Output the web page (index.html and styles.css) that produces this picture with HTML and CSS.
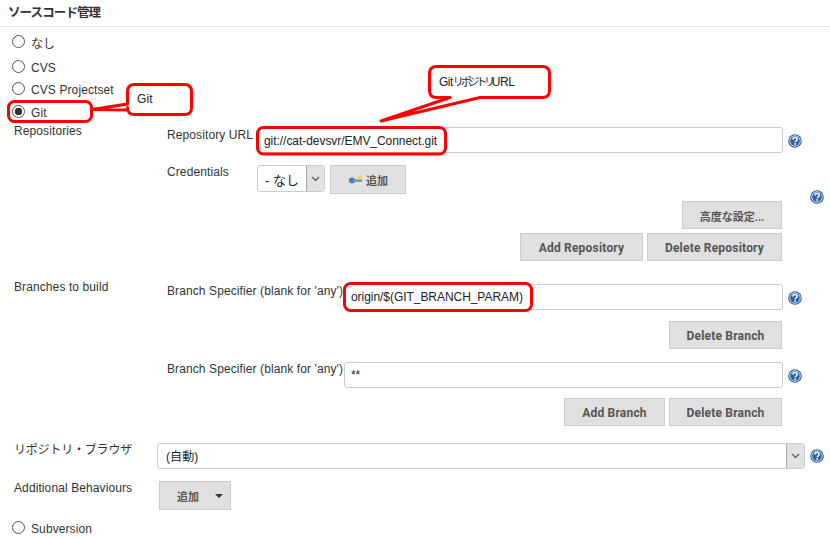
FILE: index.html
```html
<!DOCTYPE html>
<html lang="ja">
<head>
<meta charset="utf-8">
<title>ソースコード管理</title>
<link rel="stylesheet" href="styles.css">
</head>
<body>
<svg width="0" height="0" class="defs">
  <symbol id="help" viewBox="0 0 14 14">
    <circle cx="7" cy="7" r="6.8" fill="#2f5f9e"/>
    <circle cx="7" cy="7" r="5.7" fill="#dfe9f5"/>
    <circle cx="7" cy="7" r="4.8" fill="#2f62a3"/>
    <path d="M4.9 5.4c0-1.2 1-1.9 2.2-1.9s2.1.7 2.1 1.8c0 1.6-1.9 1.5-1.9 2.9" fill="none" stroke="#fff" stroke-width="1.5"/>
    <rect x="6.4" y="9.2" width="1.6" height="1.6" fill="#fff"/>
  </symbol>
</svg>
<main class="page">
  <h2 class="title">ソースコード管理</h2>
  <div class="radios">
    <label class="radio"><input type="radio" name="scm"><span>なし</span></label>
    <label class="radio"><input type="radio" name="scm"><span>CVS</span></label>
    <label class="radio"><input type="radio" name="scm"><span>CVS Projectset</span></label>
    <label class="radio"><input type="radio" name="scm" checked><span>Git</span></label>
  </div>

  <section class="group repos">
    <div class="group-label">Repositories</div>
    <div class="group-body">
      <div class="field url-row">
        <div class="field-label short">Repository URL</div>
        <input class="text" value="git://cat-devsvr/EMV_Connect.git">
        <svg class="help"><use href="#help"/></svg>
      </div>
      <div class="cred-row">
        <div class="field-label short">Credentials</div>
        <div class="select cred"><span class="select-value">- なし</span><span class="select-arrow"><svg width="9" height="6" viewBox="0 0 9 6"><path d="M1 1l3.5 3.5L8 1" fill="none" stroke="#555" stroke-width="1.1"/></svg></span></div>
        <button class="btn add-key" type="button">
          <svg width="15" height="10" viewBox="0 0 15 10"><circle cx="4" cy="5.5" r="3" fill="#4a7fb8"/><rect x="5" y="4.4" width="9" height="2.4" fill="#6b96c4"/><circle cx="12" cy="2.6" r="2" fill="#f1d94a"/></svg>
          <span>追加</span>
        </button>
        <svg class="help outer"><use href="#help"/></svg>
      </div>
      <div class="actions first"><button class="btn adv" type="button">高度な設定...</button></div>
      <div class="actions"><button class="btn add-repo" type="button">Add Repository</button><button class="btn del-repo" type="button">Delete Repository</button></div>
    </div>
  </section>

  <section class="group branches">
    <div class="group-label">Branches to build</div>
    <div class="group-body">
      <div class="field">
        <div class="field-label wide">Branch Specifier (blank for 'any')</div>
        <input class="text" value="origin/$(GIT_BRANCH_PARAM)">
        <svg class="help"><use href="#help"/></svg>
      </div>
      <div class="actions spec-actions"><button class="btn del-branch" type="button">Delete Branch</button></div>
      <div class="field">
        <div class="field-label wide">Branch Specifier (blank for 'any')</div>
        <input class="text" value="**">
        <svg class="help"><use href="#help"/></svg>
      </div>
      <div class="actions spec-actions"><button class="btn add-branch" type="button">Add Branch</button><button class="btn del-branch" type="button">Delete Branch</button></div>
    </div>
  </section>

  <section class="browser-row">
    <div class="browser-label">リポジトリ・ブラウザ</div>
    <div class="select browser"><span class="select-value">(自動)</span><span class="select-arrow"><svg width="9" height="6" viewBox="0 0 9 6"><path d="M1 1l3.5 3.5L8 1" fill="none" stroke="#555" stroke-width="1.1"/></svg></span></div>
    <svg class="help"><use href="#help"/></svg>
  </section>

  <section class="behaviours">
    <div class="behaviours-label">Additional Behaviours</div>
    <button class="btn menu" type="button"><span>追加</span><i class="caret"></i></button>
  </section>

  <label class="radio last"><input type="radio" name="scm"><span>Subversion</span></label>

  <svg class="marks" width="830" height="539" viewBox="0 0 830 539">
    <g fill="none" stroke="#f00" stroke-width="3">
      <rect x="8.500" y="101.500" width="83" height="20" rx="6"/>
      <rect x="257.500" y="127.500" width="188" height="26.500" rx="6"/>
      <rect x="344.500" y="283.500" width="187" height="27" rx="6"/>
    </g>
    <path d="M92 109.500L127.500 104V91.500Q127.500 84.500 134.500 84.500H184.500Q191.500 84.500 191.500 91.500V107.500Q191.500 114.500 184.500 114.500H134.500Q127.500 114.500 127.500 107.500V110Z" fill="#fff" stroke="#f00" stroke-width="3" stroke-linejoin="round"/>
    <path d="M381 121L450 97.500H436.500Q429.500 97.500 429.500 90.500V73.500Q429.500 66.500 436.500 66.500H542.500Q549.500 66.500 549.500 73.500V90.500Q549.500 97.500 542.500 97.500H480Z" fill="#fff" stroke="#f00" stroke-width="3" stroke-linejoin="round"/>
  </svg>
  <div class="note note-git">Git</div>
  <div class="note note-url">Git<span class="squeeze">リポジトリ</span>URL</div>
</main>
</body>
</html>
```
FILE: styles.css
```css
* { box-sizing: border-box; }
html, body { margin: 0; padding: 0; background: #fff; }
body {
  font-family: "Liberation Sans", Arial, "Noto Sans CJK JP", sans-serif;
  font-size: 12px;
  letter-spacing: 0.1px;
  color: #333;
  overflow: hidden;
}
.defs { position: absolute; }
.page { position: relative; width: 830px; height: 539px; overflow: hidden; }

.title {
  margin: 0;
  height: 27px;
  padding: 5px 0 0 8px;
  font-size: 12.500px;
  letter-spacing: -0.9px;
  line-height: 16px;
  font-weight: bold;
  color: #333;
  border-bottom: 1px solid #e4e4e4;
}

.radios { padding-top: 4px; height: 100px; }
.radio {
  display: flex;
  align-items: center;
  height: 23px;
  padding-left: 12px;
  color: #333;
}
.radios .radio:nth-child(2) { margin-top: 2px; }
.radios .radio:nth-child(3) { margin-top: -1px; }
.radio input {
  appearance: none;
  margin: -3px 6px 0 0;
  width: 13px;
  height: 13px;
  border: 1.5px solid #555;
  border-radius: 50%;
  background: #fff;
}
.radio input:checked {
  background: radial-gradient(circle, #333 0 3.5px, #fff 4px);
}
.radio.last { height: 23px; margin-top: 7px; }

.group { display: flex; }
.group-label { width: 167px; padding-left: 14px; line-height: 14px; }
.group-body { flex: 1; min-width: 0; padding-right: 6px; }
.repos .group-label { margin-top: -3px; }
.repos { height: 157px; }
.branches { height: 159px; }
.branches .group-label { margin-top: -4px; }

.field { display: flex; align-items: flex-start; height: 26px; padding-right: 22px; }
.field-label { line-height: 14px; }
.url-row .field-label { margin-top: 1px; }
.url-row .text { padding-top: 2px; }
.field-label.short { width: 90px; }
.field-label.wide { width: 177px; white-space: nowrap; }
.text {
  flex: 1;
  min-width: 0;
  height: 26px;
  padding: 0 6px;
  font: 12px "Liberation Sans", Arial, sans-serif;
  letter-spacing: -0.05px;
  color: #222;
  border: 1px solid #ccc;
  border-radius: 3px;
  background: #fff;
}
.help { width: 14px; height: 14px; flex: none; }
.field .help { margin: 7px 0 0 5px; }

.cred-row { display: flex; align-items: flex-start; height: 36px; margin-top: 12px; }
.select {
  display: flex;
  height: 27px;
  border: 1px solid #ccc;
  border-radius: 3px;
  background: #fff;
}
.select-value { flex: 1; padding: 1px 8px 0; line-height: 25px; color: #222; white-space: nowrap; }
.select-arrow {
  width: 18px;
  flex: none;
  display: flex;
  align-items: center;
  justify-content: center;
  background: #e2e2e2;
  border-left: 1px solid #aaa;
}
.cred { width: 68px; margin-right: 5px; }
.cred .select-value { font-size: 13px; padding: 2px 0 0 7px; letter-spacing: 0; }
.btn {
  display: inline-flex;
  align-items: center;
  justify-content: center;
  gap: 3px;
  height: 28px;
  padding: 1px 0 0;
  border: 1px solid #ccc;
  background: #e0e0e0;
  color: #555;
  font: bold 12px Roboto, "Noto Sans CJK JP", sans-serif;
  letter-spacing: 0.2px;
}
.add-key { width: 76px; height: 29px; font-size: 11px; letter-spacing: 0; }
.help.outer { margin: 25px 0 0 auto; }

.actions { display: flex; justify-content: flex-end; gap: 4px; padding-right: 42px; }
.actions.first { margin-bottom: 4px; }
.adv { width: 100px; font-size: 11px; letter-spacing: 0; }
.add-repo { width: 123px; }
.del-repo { width: 135px; }
.del-branch { width: 113px; }
.add-branch { width: 101px; }
.spec-actions { margin: 11px 0 13px; }
.spec-actions:last-child { margin-top: 10px; }

.browser-row { display: flex; align-items: flex-start; padding: 0 6px 0 14px; height: 38px; }
.browser-label { width: 143px; line-height: 14px; font-size: 12px; letter-spacing: -0.2px; }
.browser { flex: 1; height: 26px; margin-right: 5px; }
.browser-row .help { margin-top: 6px; }

.behaviours { display: flex; align-items: flex-start; padding-left: 14px; }
.behaviours-label { width: 145px; line-height: 14px; }
.menu { width: 72px; height: 29px; gap: 16px; padding-left: 10px; }
.menu span { font-size: 11px; letter-spacing: 0; }
.caret { width: 0; height: 0; border: 4px solid transparent; border-top-color: #333; border-bottom: 0; }

.marks { position: absolute; left: 0; top: 0; pointer-events: none; }
.note { position: absolute; color: #222; line-height: 14px; }
.note-git { left: 137px; top: 92px; }
.note-url { left: 439px; top: 75px; letter-spacing: -0.5px; }
.squeeze { font-size: 11px; letter-spacing: -3.200px; }
```
